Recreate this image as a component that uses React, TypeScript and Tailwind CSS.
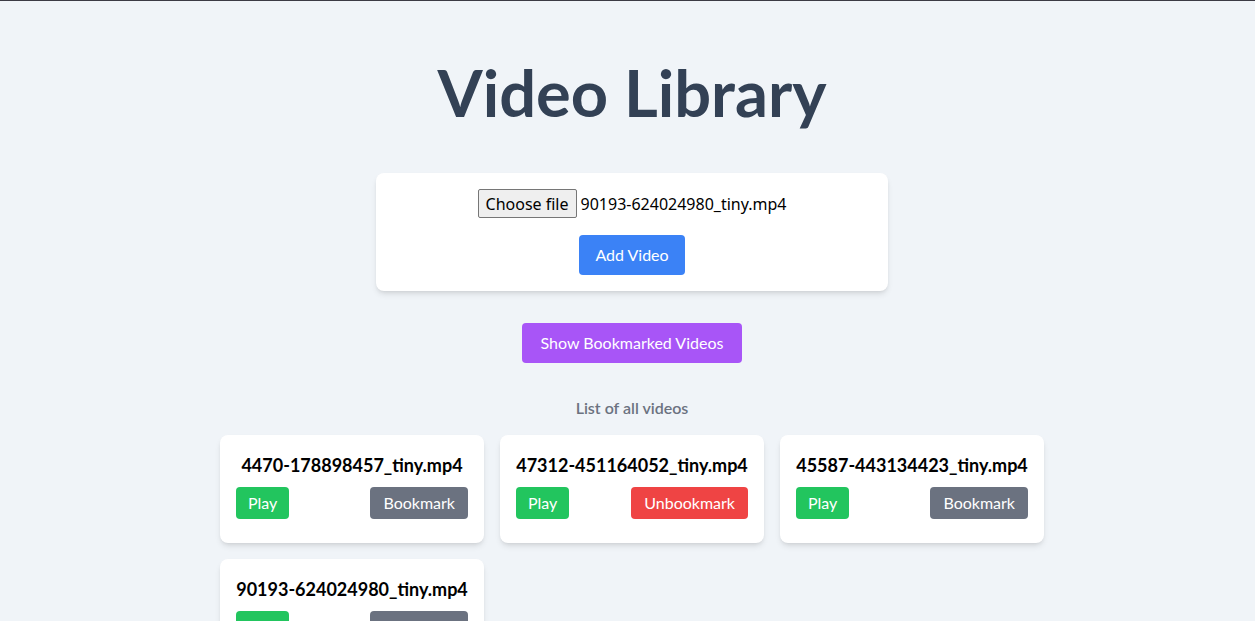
const videos = [
  { name: "4470-178898457_tiny.mp4", bookmarked: false },
  { name: "47312-451164052_tiny.mp4", bookmarked: true },
  { name: "45587-443134423_tiny.mp4", bookmarked: false },
  { name: "90193-624024980_tiny.mp4", bookmarked: false },
];

export default function App() {
  return (
    <div className="min-h-screen bg-[#f0f4f8] border-t border-[#3c3b44] pl-[9px] font-['Lato',sans-serif]">
      <div className="flex flex-col items-center pt-[59px] pb-10">
        <h1 className="text-[65px] font-bold text-[#334155] leading-none mb-[48px]">Video Library</h1>

        {/* upload */}
        <div className="w-[512px] bg-white rounded-lg shadow-md p-4 flex flex-col items-center gap-4">
          <div className="flex items-center gap-1 font-['Noto_Sans',sans-serif] text-base text-black">
            <span className="h-[29px] px-[7px] flex items-center bg-[#efefef] border border-[#767676] rounded-[2px]">Choose file</span>
            <span>90193-624024980_tiny.mp4</span>
          </div>
          <button className="px-4 py-2 mt-px bg-[#3b82f6] text-white rounded">Add Video</button>
        </div>

        <button className="mt-8 px-[19px] py-2 bg-[#a855f7] text-white rounded">Show Bookmarked Videos</button>

        <p className="mt-[33px] text-[#6b7280] font-semibold">List of all videos</p>

        <div className="mt-[15px] grid grid-cols-3 gap-4 w-[824px]">
          {videos.map((v) => (
            <div key={v.name} className="bg-white rounded-lg shadow-md px-4 pt-4 pb-6">
              <h3 className="text-lg font-bold text-black text-center whitespace-nowrap mb-2">{v.name}</h3>
              <div className="flex justify-between">
                <button className="px-3 py-1 bg-[#22c55e] text-white rounded">Play</button>
                {v.bookmarked ? (
                  <button className="px-[13px] py-1 bg-[#ef4444] text-white rounded">Unbookmark</button>
                ) : (
                  <button className="px-[13px] py-1 bg-[#6b7280] text-white rounded">Bookmark</button>
                )}
              </div>
            </div>
          ))}
        </div>
      </div>
    </div>
  );
}
